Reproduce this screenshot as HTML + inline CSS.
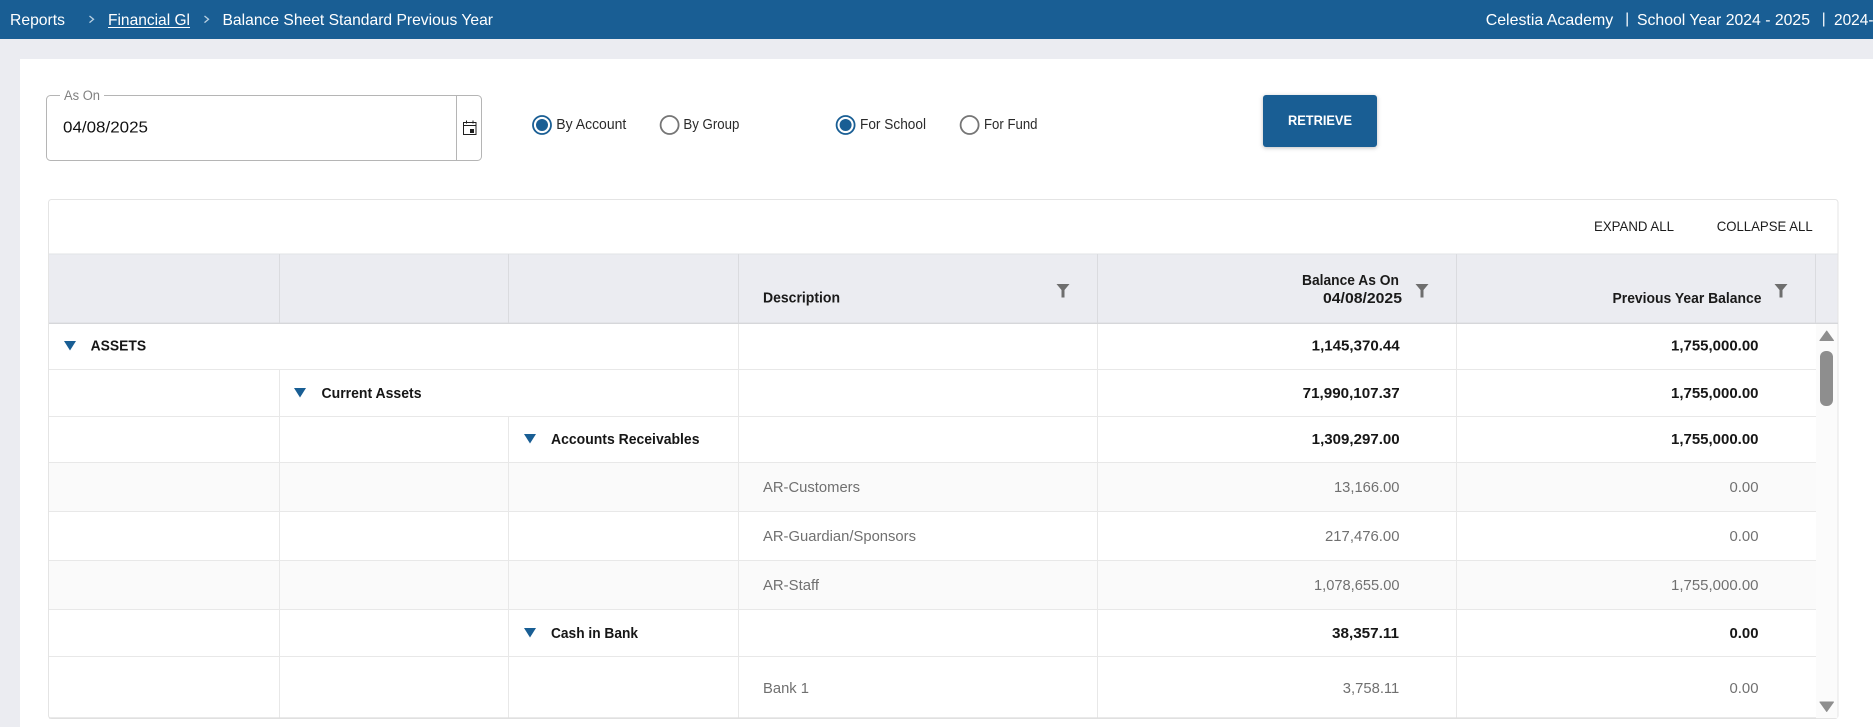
<!DOCTYPE html>
<html lang="en">
<head>
<meta charset="utf-8">
<title>Balance Sheet Standard Previous Year</title>
<style>
html,body{margin:0;padding:0;width:1873px;height:727px;overflow:hidden;background:#ebecf1}
svg{display:block}
text{font-family:"Liberation Sans",Arial,sans-serif;font-size:14px;fill:#1c1c1c}
.w{fill:#fff;font-size:16px}
.b{font-weight:700;font-size:14.5px;fill:#161616}
.g{fill:#707070;font-size:14.5px}
.r{font-size:14.5px;fill:#2a2a2a}
.m{font-size:14px;fill:#1c1c1c}
.hd{font-size:14.5px;font-weight:700;fill:#1a1a1a}
.l{stroke:#e8e8e8;stroke-width:1;fill:none}
.h{stroke:#dadbdf;stroke-width:1;fill:none}
</style>
</head>
<body>
<svg width="1873" height="727" viewBox="0 0 1873 727" xmlns="http://www.w3.org/2000/svg">
<!-- top bar -->
<rect x="0" y="0" width="1873" height="39" fill="#195e94"/>
<text class="w" x="10" y="25" textLength="55" lengthAdjust="spacingAndGlyphs">Reports</text>
<path d="M89.5 16l4 3.3-4 3.3" fill="none" stroke="#b9d0e2" stroke-width="1.3"/>
<text class="w" x="108" y="25" textLength="82" lengthAdjust="spacingAndGlyphs">Financial Gl</text>
<rect x="108" y="27" width="82" height="1" fill="#fff"/>
<path d="M204.5 16l4 3.3-4 3.3" fill="none" stroke="#b9d0e2" stroke-width="1.3"/>
<text class="w" x="222.5" y="25" textLength="270.5" lengthAdjust="spacingAndGlyphs">Balance Sheet Standard Previous Year</text>
<text class="w" x="1485.7" y="25" textLength="127.5" lengthAdjust="spacingAndGlyphs">Celestia Academy</text>
<rect x="1626.5" y="12.5" width="1.4" height="14" fill="#e6eef5"/>
<text class="w" x="1637" y="25" textLength="173" lengthAdjust="spacingAndGlyphs">School Year 2024 - 2025</text>
<rect x="1823" y="12.5" width="1.4" height="14" fill="#e6eef5"/>
<text class="w" x="1834" y="25" textLength="39.5" lengthAdjust="spacingAndGlyphs">2024-</text>

<!-- card -->
<rect x="20" y="59" width="1853" height="668" fill="#fff"/>

<!-- As On field -->
<rect x="46.5" y="95.5" width="435" height="65" rx="4" fill="#fff" stroke="#b5b5b5" stroke-width="1"/>
<rect x="60" y="92" width="44" height="6" fill="#fff"/>
<text x="64" y="100" textLength="36" lengthAdjust="spacingAndGlyphs" style="font-size:13.5px;fill:#808080">As On</text>
<text x="63" y="132.5" textLength="85" lengthAdjust="spacingAndGlyphs" style="font-size:16px;fill:#111">04/08/2025</text>
<path d="M456.5 96V160" stroke="#b5b5b5" stroke-width="1" fill="none"/>
<g fill="none" stroke="#1f1f1f" stroke-width="1">
<rect x="463.5" y="122.5" width="12.5" height="12"/>
<path d="M463.5 125.5h12.5"/>
<path d="M466.5 120.5v3M473 120.5v3"/>
</g>
<rect x="470" y="129" width="4" height="4" fill="#1f1f1f"/>

<!-- radios -->
<circle cx="542" cy="125" r="9" fill="#fff" stroke="#195e94" stroke-width="1.8"/>
<circle cx="542" cy="125" r="6" fill="#195e94"/>
<text class="r" x="556.3" y="129" textLength="70" lengthAdjust="spacingAndGlyphs">By Account</text>
<circle cx="669.6" cy="125" r="9" fill="#fff" stroke="#757575" stroke-width="1.8"/>
<text class="r" x="683.4" y="129" textLength="56" lengthAdjust="spacingAndGlyphs">By Group</text>
<circle cx="845.6" cy="125" r="9" fill="#fff" stroke="#195e94" stroke-width="1.8"/>
<circle cx="845.6" cy="125" r="6" fill="#195e94"/>
<text class="r" x="860" y="129" textLength="66" lengthAdjust="spacingAndGlyphs">For School</text>
<circle cx="969.6" cy="125" r="9" fill="#fff" stroke="#757575" stroke-width="1.8"/>
<text class="r" x="984" y="129" textLength="53.5" lengthAdjust="spacingAndGlyphs">For Fund</text>

<!-- retrieve -->
<rect x="1263" y="95" width="114" height="52" rx="3" fill="#195e94" style="filter:drop-shadow(0 1px 2px rgba(0,0,0,.25))"/>
<text x="1288" y="125" textLength="64" lengthAdjust="spacingAndGlyphs" style="font-size:13.5px;font-weight:700;fill:#fff">RETRIEVE</text>

<!-- table frame -->
<rect x="48.5" y="199.5" width="1789.5" height="519" rx="3" fill="#fff" stroke="#e4e4e4" stroke-width="1"/>
<text class="m" x="1594" y="231" textLength="80" lengthAdjust="spacingAndGlyphs">EXPAND ALL</text>
<text class="m" x="1716.7" y="231" textLength="96" lengthAdjust="spacingAndGlyphs">COLLAPSE ALL</text>

<!-- header row -->
<rect x="49" y="254" width="1788.5" height="69" fill="#ebecf1"/>
<path d="M49 254h1789" stroke="#e2e3e6" stroke-width="1" fill="none"/>
<path d="M49 323.3h1789" stroke="#d6d7da" stroke-width="1.4" fill="none"/>
<path class="h" d="M279.5 254v69M508.5 254v69M738.5 254v69M1097.5 254v69M1456.5 254v69M1815.5 254v69"/>
<text class="hd" x="763" y="302.5" textLength="77" lengthAdjust="spacingAndGlyphs">Description</text>
<text class="hd" x="1302" y="285" textLength="97" lengthAdjust="spacingAndGlyphs">Balance As On</text>
<text class="hd" x="1323" y="303" textLength="79" lengthAdjust="spacingAndGlyphs">04/08/2025</text>
<text class="hd" x="1612.5" y="303" textLength="149" lengthAdjust="spacingAndGlyphs">Previous Year Balance</text>
<g fill="#6e6e6e">
<path d="M1056.5 284h13l-5 6v7.5h-3v-7.5z"/>
<path d="M1415.5 284h13l-5 6v7.5h-3v-7.5z"/>
<path d="M1774.5 284h13l-5 6v7.5h-3v-7.5z"/>
</g>

<!-- row backgrounds -->
<rect x="49" y="462.5" width="1767" height="49" fill="#fafafa"/>
<rect x="49" y="560" width="1767" height="49" fill="#fafafa"/>
<rect x="1816" y="324" width="21.5" height="394" fill="#fbfbfb"/>

<!-- grid lines -->
<path class="l" d="M49 369.5H1816M49 416.5H1816M49 462.5H1816M49 511.5H1816M49 560.5H1816M49 609.5H1816M49 656.5H1816"/>
<path class="l" d="M279.5 369.5V718M508.5 416.5V718M738.5 324V718M1097.5 324V718M1456.5 324V718"/>
<path d="M49 718h1767" stroke="#dedede" stroke-width="1.2" fill="none"/>

<!-- triangles -->
<g fill="#195e94">
<path d="M64 341h12l-6 9.5z"/>
<path d="M294 388h12l-6 9.5z"/>
<path d="M524 434h12l-6 9.5z"/>
<path d="M524 628h12l-6 9.5z"/>
</g>

<!-- group labels -->
<text class="b" x="90.6" y="350.5" textLength="55.5" lengthAdjust="spacingAndGlyphs">ASSETS</text>
<text class="b" x="321.5" y="398" textLength="100" lengthAdjust="spacingAndGlyphs">Current Assets</text>
<text class="b" x="551" y="444" textLength="148.5" lengthAdjust="spacingAndGlyphs">Accounts Receivables</text>
<text class="b" x="551" y="638" textLength="87" lengthAdjust="spacingAndGlyphs">Cash in Bank</text>

<!-- descriptions -->
<text class="g" x="763" y="492" textLength="97" lengthAdjust="spacingAndGlyphs">AR-Customers</text>
<text class="g" x="763" y="541" textLength="153" lengthAdjust="spacingAndGlyphs">AR-Guardian/Sponsors</text>
<text class="g" x="763" y="590" textLength="56" lengthAdjust="spacingAndGlyphs">AR-Staff</text>
<text class="g" x="763" y="693" textLength="46" lengthAdjust="spacingAndGlyphs">Bank 1</text>

<!-- balance values -->
<text class="b" x="1311.7" y="350.5" textLength="88" lengthAdjust="spacingAndGlyphs">1,145,370.44</text>
<text class="b" x="1302.7" y="398" textLength="97" lengthAdjust="spacingAndGlyphs">71,990,107.37</text>
<text class="b" x="1311.7" y="444" textLength="88" lengthAdjust="spacingAndGlyphs">1,309,297.00</text>
<text class="g" x="1334" y="492" textLength="65.5" lengthAdjust="spacingAndGlyphs">13,166.00</text>
<text class="g" x="1325" y="541" textLength="74.5" lengthAdjust="spacingAndGlyphs">217,476.00</text>
<text class="g" x="1314" y="590" textLength="85.5" lengthAdjust="spacingAndGlyphs">1,078,655.00</text>
<text class="b" x="1332" y="638" textLength="67" lengthAdjust="spacingAndGlyphs">38,357.11</text>
<text class="g" x="1342.8" y="693" textLength="56.5" lengthAdjust="spacingAndGlyphs">3,758.11</text>

<!-- previous year values -->
<text class="b" x="1671" y="350.5" textLength="87.5" lengthAdjust="spacingAndGlyphs">1,755,000.00</text>
<text class="b" x="1671" y="398" textLength="87.5" lengthAdjust="spacingAndGlyphs">1,755,000.00</text>
<text class="b" x="1671" y="444" textLength="87.5" lengthAdjust="spacingAndGlyphs">1,755,000.00</text>
<text class="g" x="1729.5" y="492" textLength="29" lengthAdjust="spacingAndGlyphs">0.00</text>
<text class="g" x="1729.5" y="541" textLength="29" lengthAdjust="spacingAndGlyphs">0.00</text>
<text class="g" x="1671" y="590" textLength="87.5" lengthAdjust="spacingAndGlyphs">1,755,000.00</text>
<text class="b" x="1729.5" y="638" textLength="29" lengthAdjust="spacingAndGlyphs">0.00</text>
<text class="g" x="1729.5" y="693" textLength="29" lengthAdjust="spacingAndGlyphs">0.00</text>

<!-- scrollbar -->
<path d="M1826.7 331l6.8 9.5h-13.6z" fill="#8e8e8e" stroke="#8e8e8e" stroke-width="1" stroke-linejoin="round"/>
<rect x="1820" y="351" width="13" height="55" rx="6" fill="#8e8e8e"/>
<path d="M1826.7 711.5l-6.8-9.5h13.6z" fill="#8e8e8e" stroke="#8e8e8e" stroke-width="1" stroke-linejoin="round"/>
</svg>
</body>
</html>
